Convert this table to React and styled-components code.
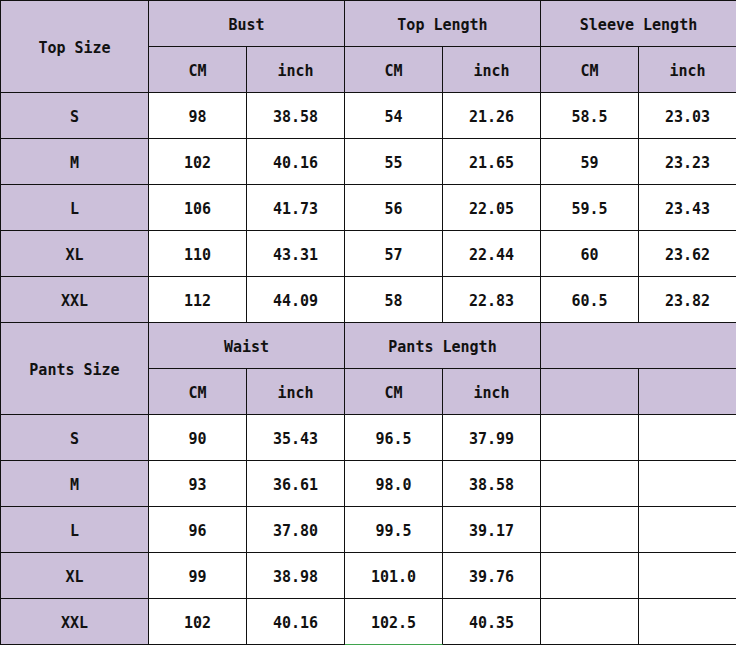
import React from "react";
import styled, { createGlobalStyle } from "styled-components";

const GlobalStyle = createGlobalStyle`
  html, body {
    margin: 0;
    padding: 0;
    background: #ffffff;
    overflow: hidden;
  }
  body {
    font-family: "DejaVu Sans Mono", "Liberation Mono", monospace;
  }
`;

const Sheet = styled.div`
  display: grid;
  grid-template-columns: 148px repeat(6, 98px);
  grid-auto-rows: 46px;
  width: 737px;
  border-left: 1px solid #111;
  border-top: 1px solid #111;
  box-sizing: content-box;
`;

const Cell = styled.div`
  grid-column: span ${(p) => p.$cols || 1};
  grid-row: span ${(p) => p.$rows || 1};
  display: flex;
  align-items: center;
  justify-content: center;
  box-sizing: border-box;
  background: ${(p) => (p.$head ? "#ccc0da" : "#ffffff")};
  border-right: 1px solid #111;
  border-bottom: 1px solid ${(p) => (p.$mark ? "#3fa34d" : "#111")};
  color: #111;
  font-family: "DejaVu Sans Mono", "Liberation Mono", monospace;
  font-weight: bold;
  font-size: 15px;
  line-height: 1;
  white-space: pre;
  padding-top: 3px;
`;

const topRows = [
  ["S", "98", "38.58", "54", "21.26", "58.5", "23.03"],
  ["M", "102", "40.16", "55", "21.65", "59", "23.23"],
  ["L", "106", "41.73", "56", "22.05", "59.5", "23.43"],
  ["XL", "110", "43.31", "57", "22.44", "60", "23.62"],
  ["XXL", "112", "44.09", "58", "22.83", "60.5", "23.82"],
];

const pantsRows = [
  ["S", "90", "35.43", "96.5", "37.99", "", ""],
  ["M", "93", "36.61", "98.0", "38.58", "", ""],
  ["L", "96", "37.80", "99.5", "39.17", "", ""],
  ["XL", "99", "38.98", "101.0", "39.76", "", ""],
  ["XXL", "102", "40.16", "102.5", "40.35", "", ""],
];

function DataRows({ rows, markLast }) {
  return rows.map((r, ri) =>
    r.map((v, ci) => (
      <Cell
        key={`${ri}-${ci}`}
        $head={ci === 0}
        $mark={markLast && ri === rows.length - 1 && ci === 3}
      >
        {v}
      </Cell>
    ))
  );
}

export default function App() {
  return (
    <>
      <GlobalStyle />
      <Sheet>
        <Cell $head $rows={2}>Top Size</Cell>
        <Cell $head $cols={2}>Bust</Cell>
        <Cell $head $cols={2}>Top Length</Cell>
        <Cell $head $cols={2}>Sleeve Length</Cell>
        <Cell $head>CM</Cell>
        <Cell $head>inch</Cell>
        <Cell $head>CM</Cell>
        <Cell $head>inch</Cell>
        <Cell $head>CM</Cell>
        <Cell $head>inch</Cell>
        <DataRows rows={topRows} />

        <Cell $head $rows={2}>Pants Size</Cell>
        <Cell $head $cols={2}>Waist</Cell>
        <Cell $head $cols={2}>Pants Length</Cell>
        <Cell $head $cols={2} />
        <Cell $head>CM</Cell>
        <Cell $head>inch</Cell>
        <Cell $head>CM</Cell>
        <Cell $head>inch</Cell>
        <Cell $head />
        <Cell $head />
        <DataRows rows={pantsRows} markLast />
      </Sheet>
    </>
  );
}
